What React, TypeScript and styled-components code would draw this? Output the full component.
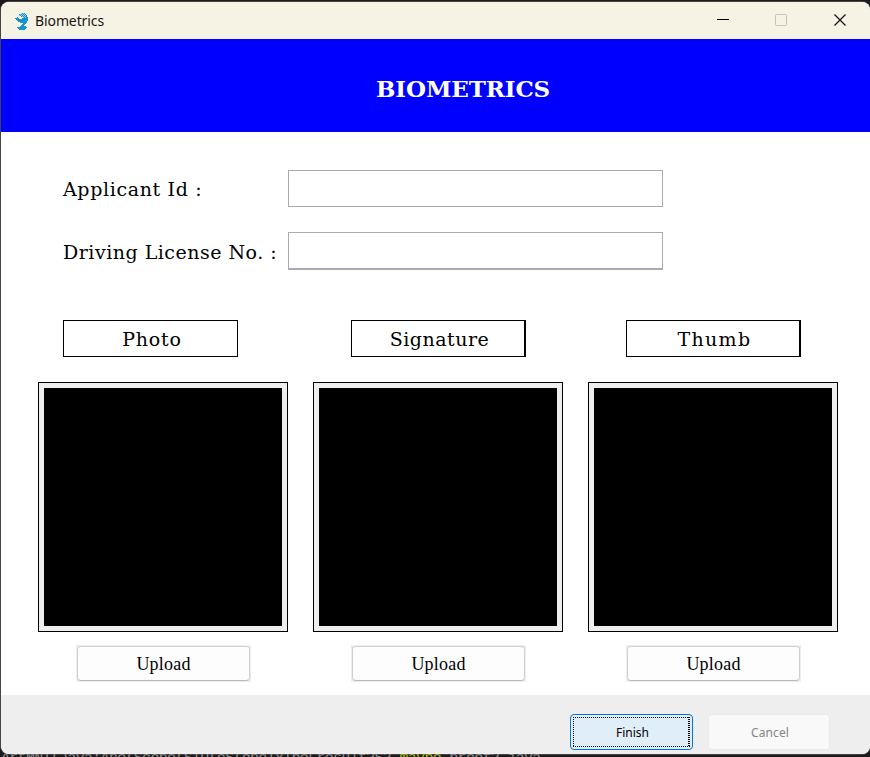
import React from "react";
import styled, { createGlobalStyle } from "styled-components";

const Global = createGlobalStyle`
  *, *::before, *::after { box-sizing: border-box; }
  html, body { margin: 0; background: #1c1c1e; overflow: hidden; }
  button, input { font: inherit; margin: 0; padding: 0; appearance: none; }
`;

const serif = `"DejaVu Serif", serif`;

const Desktop = styled.div`
  width: 870px;
  height: 757px;
  padding: 2px 0 0 1px;
  background: #1c1a1b;
  overflow: hidden;
`;

const Window = styled.main`
  display: flex;
  flex-direction: column;
  width: 869px;
  height: 752px;
  border-radius: 8px;
  background: #fff;
  overflow: hidden;
  box-shadow: 0 0 0 1px #454446;
`;

const Backdrop = styled.div`
  height: 3px;
  overflow: hidden;
  white-space: pre;
  color: #8c8c8c;
  font: 15px/9px "Liberation Mono", monospace;
  letter-spacing: -0.7px;
`;
const Key = styled.span`
  color: #a6b51c;
`;

const TitleBar = styled.header`
  display: flex;
  align-items: center;
  height: 37px;
  flex: none;
  padding: 0 1px 0 13px;
  background: #f6f3e4;
`;
const Title = styled.span`
  flex: 1;
  margin-left: 6px;
  color: #161616;
  font: 14px/20px "Noto Sans", sans-serif;
  letter-spacing: -0.1px;
`;
const Caption = styled.button`
  display: grid;
  place-items: center;
  width: 58.5px;
  height: 35px;
  margin-bottom: 2px;
  border: 0;
  background: none;
`;

const Banner = styled.div`
  flex: none;
  height: 93px;
  padding: 35px 0 0 375px;
  background: #0000ff;
  color: #fff;
  font: bold 23px/29px ${serif};
`;
const BannerText = styled.span`
  letter-spacing: -0.1px;
`;

const Form = styled.section`
  display: grid;
  grid-template-columns: 225px 375px;
  row-gap: 25px;
  padding: 38px 0 0 62px;
  height: 188px;
  flex: none;
  align-content: start;
`;
const Label = styled.label<{ $track: number; $line: number }>`
  color: #000;
  font: 19px/${(p) => p.$line}px ${serif};
  letter-spacing: ${(p) => p.$track}px;
  white-space: nowrap;
  height: 37px;
`;
const Field = styled.input<{ $bottom: number }>`
  height: ${(p) => 36 + p.$bottom}px;
  border: 1px solid #abaab2;
  border-bottom-width: ${(p) => p.$bottom}px;
  border-radius: 0;
  outline: 0;
  background: #fff;
`;

const Captures = styled.section`
  display: flex;
  gap: 25px;
  height: 375px;
  flex: none;
  padding-left: 37px;
`;
const Capture = styled.article`
  display: flex;
  flex-direction: column;
  width: 250px;
`;
const CaptureName = styled.h2<{ $indent: number; $right: number; $track: number }>`
  width: 175px;
  height: 37px;
  margin: 0 0 25px ${(p) => p.$indent}px;
  padding-left: 3px;
  border: 1px solid #000;
  border-right-width: ${(p) => p.$right}px;
  text-align: center;
  font: 19px/36px ${serif};
  letter-spacing: ${(p) => p.$track}px;
`;
const Preview = styled.div`
  height: 250px;
  border: 1px solid #000;
  padding: 5px;
  background: #eee;
`;
const Image = styled.div`
  height: 100%;
  background: #000;
`;
const UploadWell = styled.div`
  width: 175px;
  height: 37px;
  margin: 13px 0 0 38px;
  padding: 1px;
  background: #eee;
`;
const Upload = styled.button`
  width: 173px;
  height: 35px;
  padding-top: 2px;
  border: 1px solid #d0d0d0;
  border-bottom-color: #b8b8b8;
  border-radius: 4px;
  background: #fdfdfd;
  color: #000;
  font: 18px/31px "Liberation Serif", serif;
  letter-spacing: 0.2px;
`;

const Footer = styled.footer`
  display: flex;
  flex: 1;
  justify-content: flex-end;
  gap: 15px;
  padding: 19px 40px 0 0;
  background: #eee;
`;
const footText = `12px/18px "Noto Sans", sans-serif`;
const Finish = styled.button`
  width: 123px;
  height: 36px;
  padding: 2px;
  border: 1px solid #0078d4;
  border-radius: 4px;
  background: #e0eef9;
  color: #000;
  font: ${footText};
`;
const Focus = styled.span`
  display: flex;
  align-items: center;
  justify-content: center;
  height: 30px;
  padding: 1px 0 0 2px;
  border: 1px solid transparent;
  background:
    repeating-linear-gradient(90deg, #000 0 1px, transparent 1px 2px) 0 0 / 100% 1px no-repeat,
    repeating-linear-gradient(90deg, #000 0 1px, transparent 1px 2px) 0 100% / 100% 1px no-repeat,
    repeating-linear-gradient(#000 0 1px, transparent 1px 2px) 0 0 / 1px 100% no-repeat,
    repeating-linear-gradient(#000 0 1px, transparent 1px 2px) 100% 0 / 2px 100% no-repeat;
  background-origin: border-box;
`;
const Cancel = styled.button`
  width: 122px;
  height: 36px;
  border: 1px solid #eaeaea;
  border-radius: 4px;
  background: #f9f9f9;
  color: #858585;
  font: ${footText};
  letter-spacing: 0.1px;
  padding: 2px 0 0 2px;
`;

const AppIcon = () => (
  <svg width="15" height="19" viewBox="0 0 15 19" shapeRendering="crispEdges">
    <path
      fill="#1593ca"
      d="M7 2h4v1h1v1h1v2h1v4h-1v2h-1v1h-1v1h-1v1h2v1h1v1h-1v1h-1v1H5v-1H4v-1H3v-1h3v-1h1v-1h1v-1h1v-1H6v-1H4v-1H3V9H2V8H1V7h2V6h1v1h1v1h3V7h1V6H7V5H5V3h2Z"
    />
    <path
      fill="#8fcfdf"
      d="M7 2h1v1H7Zm2 0h1v1H9ZM6 3h1v1H6Zm2 0h1v1H8Zm2 0h1v1h-1ZM5 4h1v1H5Zm2 0h1v1H7Zm2 0h1v1H9Zm2 0h1v1h-1ZM8 5h1v1H8Zm2 0h1v1h-1ZM9 6h1v1H9Zm2 0h1v1h-1Z"
    />
  </svg>
);

const captures = [
  { name: "Photo", indent: 25, right: 1, track: 0.8 },
  { name: "Signature", indent: 38, right: 2, track: 0.5 },
  { name: "Thumb", indent: 38, right: 2, track: 1.3 },
];

export default function App() {
  return (
    <Desktop>
      <Global />
      <Window>
        <TitleBar>
          <AppIcon />
          <Title>Biometrics</Title>
          <Caption aria-label="Minimize">
            <svg width="12" height="12" shapeRendering="crispEdges">
              <path d="M0 5h12v1H0Z" fill="#000" />
            </svg>
          </Caption>
          <Caption aria-label="Maximize" disabled>
            <svg width="12" height="12">
              <rect x=".5" y=".5" width="11" height="11" rx="1" fill="none" stroke="#c6c3b6" />
            </svg>
          </Caption>
          <Caption aria-label="Close">
            <svg width="12" height="12">
              <path d="m.5.5 11 11m0-11-11 11" stroke="#111" strokeWidth="1.2" />
            </svg>
          </Caption>
        </TitleBar>
        <Banner>
          <BannerText>BIOMETRICS</BannerText>
        </Banner>
        <Form>
          <Label $track={0.65} $line={38} htmlFor="applicant">Applicant Id :</Label>
          <Field $bottom={1} id="applicant" />
          <Label $track={0.5} $line={40} htmlFor="license">Driving License No. :</Label>
          <Field $bottom={2} id="license" />
        </Form>
        <Captures>
          {captures.map((c) => (
            <Capture key={c.name}>
              <CaptureName $indent={c.indent} $right={c.right} $track={c.track}>
                {c.name}
              </CaptureName>
              <Preview>
                <Image />
              </Preview>
              <UploadWell>
                <Upload>Upload</Upload>
              </UploadWell>
            </Capture>
          ))}
        </Captures>
        <Footer>
          <Finish>
            <Focus>Finish</Focus>
          </Finish>
          <Cancel disabled>Cancel</Cancel>
        </Footer>
      </Window>
      <Backdrop aria-hidden>
        {"ArtMNT(Java:Ano(Scope(STU(eS(opeTxTheFresult?S2 "}
        <Key>maybe</Key>
        {" proof?.java"}
      </Backdrop>
    </Desktop>
  );
}
